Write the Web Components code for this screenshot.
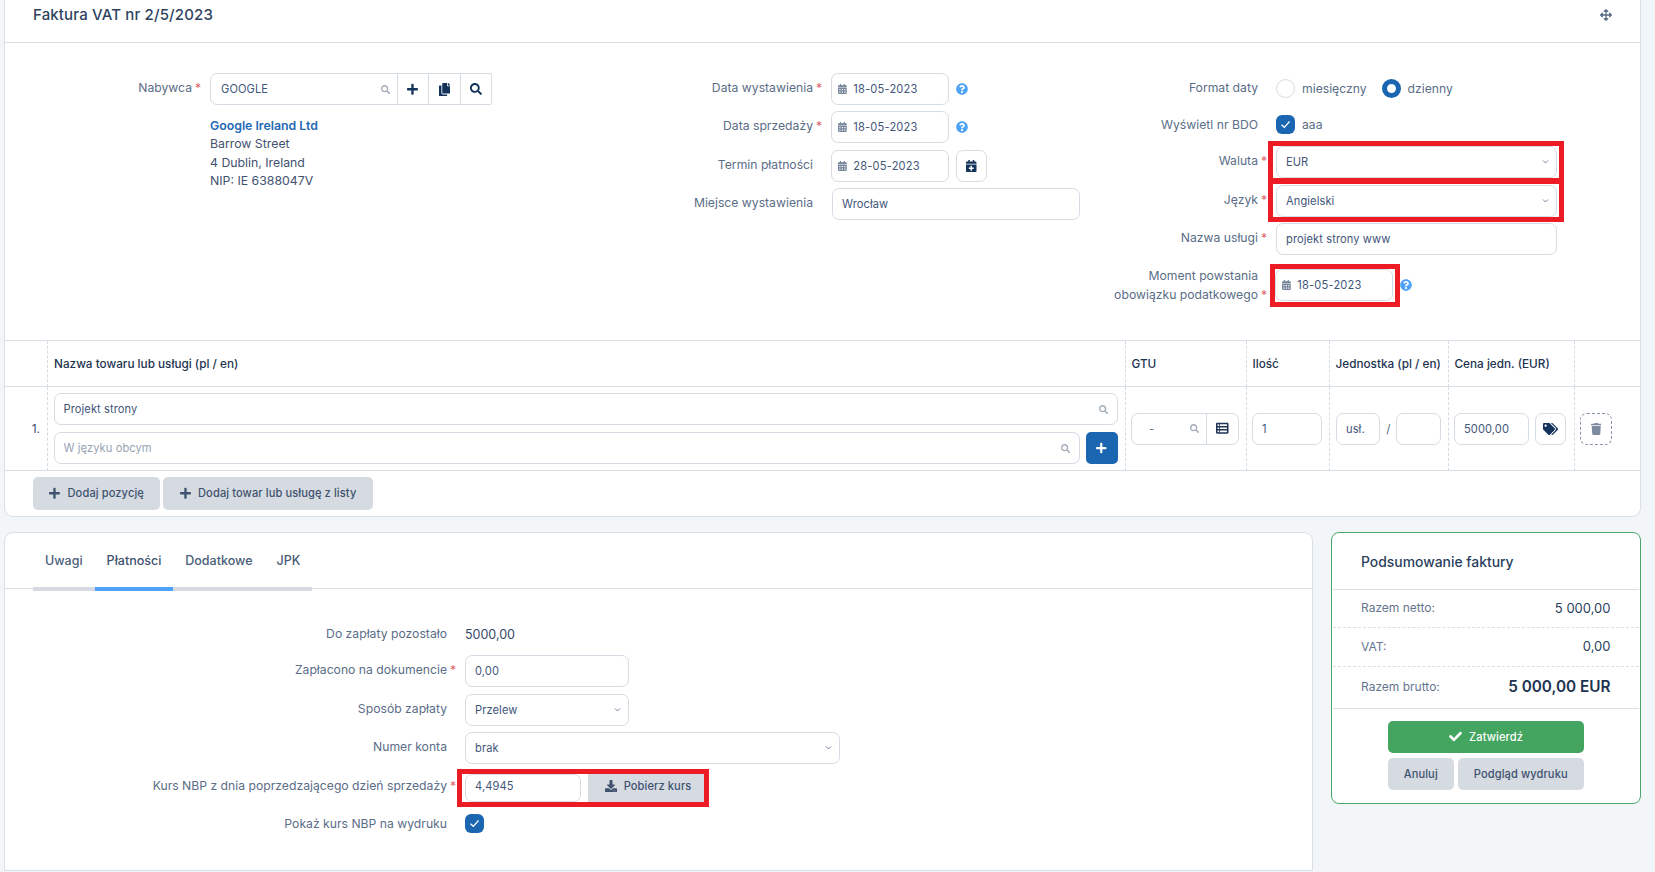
<!DOCTYPE html>
<html lang="pl"><head><meta charset="utf-8"><title>Faktura VAT</title>
<style>
html,body{margin:0;padding:0;background:#f3f6f9;height:872px;overflow:hidden;font-family:Inter,"Liberation Sans",sans-serif;font-size:12px;color:#3f5270}
</style></head><body>
<invoice-app></invoice-app>
<script>
const ICONS={
search:[512,"M505 442.7L405.3 343c-4.5-4.5-10.6-7-17-7H372c27.6-35.3 44-79.7 44-128C416 93.1 322.9 0 208 0S0 93.1 0 208s93.1 208 208 208c48.3 0 92.7-16.4 128-44v16.3c0 6.4 2.5 12.5 7 17l99.7 99.7c9.4 9.4 24.6 9.4 33.9 0l28.3-28.3c9.4-9.4 9.4-24.6.1-34zM208 336c-70.7 0-128-57.2-128-128 0-70.7 57.2-128 128-128 70.7 0 128 57.2 128 128 0 70.7-57.2 128-128 128z"],
plus:[448,"M416 208H272V64c0-17.67-14.33-32-32-32h-32c-17.67 0-32 14.33-32 32v144H32c-17.67 0-32 14.33-32 32v32c0 17.67 14.33 32 32 32h144v144c0 17.67 14.33 32 32 32h32c17.67 0 32-14.33 32-32V304h144c17.67 0 32-14.33 32-32v-32c0-17.67-14.33-32-32-32z"],
copy:[448,"M320 448v40c0 13.255-10.745 24-24 24H24c-13.255 0-24-10.745-24-24V120c0-13.255 10.745-24 24-24h72v296c0 30.879 25.121 56 56 56h168zm0-344V0H152c-13.255 0-24 10.745-24 24v368c0 13.255 10.745 24 24 24h272c13.255 0 24-10.745 24-24V128H344c-13.2 0-24-10.8-24-24zm120.971-31.029L375.029 7.029A24 24 0 0 0 358.059 0H352v96h96v-6.059a24 24 0 0 0-7.029-16.97z"],
cal:[448,"M0 464c0 26.5 21.5 48 48 48h352c26.5 0 48-21.5 48-48V192H0v272zm320-196c0-6.6 5.4-12 12-12h40c6.6 0 12 5.4 12 12v40c0 6.6-5.4 12-12 12h-40c-6.6 0-12-5.4-12-12v-40zm0 128c0-6.6 5.4-12 12-12h40c6.6 0 12 5.4 12 12v40c0 6.6-5.4 12-12 12h-40c-6.6 0-12-5.4-12-12v-40zM192 268c0-6.6 5.4-12 12-12h40c6.6 0 12 5.4 12 12v40c0 6.6-5.4 12-12 12h-40c-6.6 0-12-5.4-12-12v-40zm0 128c0-6.6 5.4-12 12-12h40c6.6 0 12 5.4 12 12v40c0 6.6-5.4 12-12 12h-40c-6.6 0-12-5.4-12-12v-40zM64 268c0-6.6 5.4-12 12-12h40c6.6 0 12 5.4 12 12v40c0 6.6-5.4 12-12 12H76c-6.6 0-12-5.4-12-12v-40zm0 128c0-6.6 5.4-12 12-12h40c6.6 0 12 5.4 12 12v40c0 6.6-5.4 12-12 12H76c-6.6 0-12-5.4-12-12v-40zM400 64h-48V16c0-8.8-7.2-16-16-16h-32c-8.8 0-16 7.2-16 16v48H160V16c0-8.8-7.2-16-16-16h-32c-8.8 0-16 7.2-16 16v48H48C21.5 64 0 85.5 0 112v48h448v-48c0-26.5-21.5-48-48-48z"],
calplus:[448,"M436 160H12c-6.6 0-12-5.4-12-12v-36c0-26.5 21.5-48 48-48h48V12c0-6.6 5.4-12 12-12h40c6.6 0 12 5.4 12 12v52h128V12c0-6.6 5.4-12 12-12h40c6.6 0 12 5.4 12 12v52h48c26.5 0 48 21.5 48 48v36c0 6.6-5.4 12-12 12zM12 192h424c6.6 0 12 5.4 12 12v260c0 26.5-21.5 48-48 48H48c-26.5 0-48-21.5-48-48V204c0-6.6 5.4-12 12-12zm316 140c0-6.6-5.4-12-12-12h-60v-60c0-6.6-5.4-12-12-12h-40c-6.6 0-12 5.4-12 12v60h-60c-6.6 0-12 5.4-12 12v40c0 6.6 5.4 12 12 12h60v60c0 6.6 5.4 12 12 12h40c6.6 0 12-5.4 12-12v-60h60c6.6 0 12-5.4 12-12v-40z"],
help:[512,"M504 256c0 136.997-111.043 248-248 248S8 392.997 8 256C8 119.083 119.043 8 256 8s248 111.083 248 248zM262.655 90c-54.497 0-89.255 22.957-116.549 63.758-3.536 5.286-2.353 12.415 2.715 16.258l34.699 26.31c5.205 3.947 12.621 3.008 16.665-2.122 17.864-22.658 30.113-35.797 57.303-35.797 20.429 0 45.698 13.148 45.698 32.958 0 14.976-12.363 22.667-32.534 33.976C247.128 238.528 216 254.941 216 296v4c0 6.627 5.373 12 12 12h56c6.627 0 12-5.373 12-12v-1.333c0-28.462 83.186-29.647 83.186-106.667 0-58.002-60.165-102-116.531-102zM256 338c-25.365 0-46 20.635-46 46 0 25.364 20.635 46 46 46s46-20.636 46-46c0-25.365-20.635-46-46-46z"],
move:[512,"M352.201 425.775l-79.196 79.196c-9.373 9.373-24.568 9.373-33.941 0l-79.196-79.196c-15.119-15.119-4.411-40.971 16.971-40.97h51.162L228 284H127.196v51.162c0 21.382-25.851 32.09-40.971 16.971L7.029 272.937c-9.373-9.373-9.373-24.569 0-33.941L86.225 159.8c15.119-15.119 40.971-4.411 40.971 16.971V228H228V127.196h-51.23c-21.382 0-32.09-25.851-16.971-40.971l79.196-79.196c9.373-9.373 24.568-9.373 33.941 0l79.196 79.196c15.119 15.119 4.411 40.971-16.971 40.971h-51.162V228h100.804v-51.162c0-21.382 25.851-32.09 40.97-16.971l79.196 79.196c9.373 9.373 9.373 24.569 0 33.941L425.773 352.2c-15.119 15.119-40.971 4.411-40.97-16.971V284H284v100.804h51.23c21.382 0 32.09 25.851 16.971 40.971z"],
check:[512,"M173.898 439.404l-166.4-166.4c-9.997-9.997-9.997-26.206 0-36.204l36.203-36.204c9.997-9.998 26.207-9.998 36.204 0L192 312.69 432.095 72.596c9.997-9.997 26.207-9.997 36.204 0l36.203 36.204c9.997 9.997 9.997 26.206 0 36.204l-294.4 294.401c-9.998 9.997-26.207 9.997-36.204-.001z"],
tags:[640,"M497.941 225.941L286.059 14.059A48 48 0 0 0 252.118 0H48C21.49 0 0 21.49 0 48v204.118a48 48 0 0 0 14.059 33.941l211.882 211.882c18.744 18.745 49.136 18.746 67.882 0l204.118-204.118c18.745-18.745 18.745-49.137 0-67.882zM112 160c-26.51 0-48-21.49-48-48s21.49-48 48-48 48 21.49 48 48-21.49 48-48 48zm513.941 133.823L421.823 497.941c-18.745 18.745-49.137 18.745-67.882 0l-.36-.36L527.64 323.522c16.999-16.999 26.36-39.6 26.36-63.64s-9.362-46.641-26.36-63.64L331.397 0h48.721a48 48 0 0 1 33.941 14.059l211.882 211.882c18.745 18.745 18.745 49.137 0 67.882z"],
trash:[448,"M432 32H312l-9.4-18.7A24 24 0 0 0 281.1 0H166.8a23.72 23.72 0 0 0-21.4 13.3L136 32H16A16 16 0 0 0 0 48v32a16 16 0 0 0 16 16h416a16 16 0 0 0 16-16V48a16 16 0 0 0-16-16zM53.2 467a48 48 0 0 0 47.9 45h245.8a48 48 0 0 0 47.9-45L416 128H32z"],
download:[512,"M216 0h80c13.3 0 24 10.7 24 24v168h87.7c17.8 0 26.7 21.5 14.1 34.1L269.7 378.3c-7.5 7.5-19.8 7.5-27.3 0L90.1 226.1c-12.6-12.6-3.7-34.1 14.1-34.1H192V24c0-13.3 10.7-24 24-24zm296 376v112c0 13.3-10.7 24-24 24H24c-13.3 0-24-10.7-24-24V376c0-13.3 10.7-24 24-24h146.7l49 49c20.1 20.1 52.5 20.1 72.6 0l49-49H488c13.3 0 24 10.7 24 24zm-124 88c0-11-9-20-20-20s-20 9-20 20 9 20 20 20 20-9 20-20zm64 0c0-11-9-20-20-20s-20 9-20 20 9 20 20 20 20-9 20-20z"],
list:[512,"M464 32H48C21.49 32 0 53.49 0 80v352c0 26.51 21.49 48 48 48h416c26.51 0 48-21.49 48-48V80c0-26.51-21.49-48-48-48zM128 416H64v-64h64v64zm0-128H64v-64h64v64zm0-128H64V96h64v64zm320 256H160v-64h288v64zm0-128H160v-64h288v64zm0-128H160V96h288v64z"]
};
class FvIcon extends HTMLElement{connectedCallback(){
 const [w,d]=ICONS[this.getAttribute('name')];const s=this.getAttribute('size')||12;const c=this.getAttribute('color')||'currentColor';
 this.attachShadow({mode:'open'}).innerHTML=`<style>:host{display:inline-flex;flex:none;line-height:0}svg{display:block}</style><svg width="${s*w/512}" height="${s}" viewBox="0 0 ${w} 512" fill="${c}"><path d="${d}"/></svg>`;
}}
customElements.define('fv-icon',FvIcon);

/* Form row: right-aligned label, star gutter, control */
class FvField extends HTMLElement{connectedCallback(){
 const star=this.hasAttribute('required');
 this.attachShadow({mode:'open'}).innerHTML=`<style>
 :host{display:grid;grid-template-columns:var(--lw,200px) 1fr;min-height:var(--mh,32px)}
 .lab{display:flex;justify-content:flex-end;color:#5b6d87;font-size:12.2px;line-height:var(--lh,18px);padding-top:var(--lp,6px);text-align:right;align-self:var(--la,start)}
 .star{width:18px;flex:none;padding-left:3px;box-sizing:border-box;color:#dc5a62;text-align:left;align-self:end}
 .ctl{display:flex;align-items:center;min-width:0;gap:7px}
 </style><div class="lab"><span><slot name="label"></slot></span><span class="star">${star?'*':''}</span></div><div class="ctl"><slot></slot></div>`;
}}
customElements.define('fv-field',FvField);

/* Text input / select look-alike */
class FvInput extends HTMLElement{connectedCallback(){
 const a=n=>this.getAttribute(n);const v=a('value')||'',ph=a('placeholder')||'',lead=a('lead'),trail=a('trail'),sel=this.hasAttribute('select');
 this.attachShadow({mode:'open'}).innerHTML=`<style>
 :host{display:flex;align-items:center;box-sizing:border-box;height:32px;position:relative;flex:none;width:var(--w,100%);border:1px solid #d6dce4;border-radius:7px;background:#fff;padding:0 9px;color:#42567a;font-size:11.1px;gap:7px;letter-spacing:.1px}
 :host([lead]){padding-left:6px;gap:6.5px;letter-spacing:.2px}
 :host([mark])::after{content:"";position:absolute;inset:var(--mi,-6.5px -8px -6px -9px);border:5px solid #ed1c24;pointer-events:none;z-index:3}
 .t{flex:1;white-space:nowrap;overflow:hidden;line-height:30px}.ph{color:#98a3b2}
 .chev{position:absolute;right:7px;top:12px}
 </style>${lead?`<fv-icon name="${lead}" size="10" color="#76859a"></fv-icon>`:''}<span class="t ${ph?'ph':''}">${v||ph}</span>${trail?`<fv-icon name="${trail}" size="9" color="#a3adba"></fv-icon>`:''}${sel?`<svg class="chev" width="7" height="6" viewBox="0 0 7 6" fill="none" stroke="#74839a" stroke-width="1"><path d="M1 1.5l2.5 2.5L6 1.5"/></svg>`:''}<slot></slot>`;
}}
customElements.define('fv-input',FvInput);

class FvBtn extends HTMLElement{connectedCallback(){
 const ic=this.getAttribute('icon');const is=this.getAttribute('isize')||12;
 this.attachShadow({mode:'open'}).innerHTML=`<style>
 :host{display:inline-flex;align-items:center;justify-content:center;box-sizing:border-box;height:32px;border-radius:5px;background:#d5dbe1;color:#3f5270;font-size:11.1px;font-weight:500;gap:var(--g,7.5px);white-space:nowrap;flex:none;letter-spacing:.1px}
 :host([variant=green]){background:#43a55f;color:#fff;font-weight:500}
 :host([variant=blue]){background:#1a66b0;color:#fff}
 :host([variant=outline]){background:#fff;border:1px solid #d6dce4;border-radius:7px;color:#14335a}
 :host([variant=dashed]){background:#fff;border:1px dashed #8693a6;border-radius:7px}
 </style>${ic?`<fv-icon name="${ic}" size="${is}"></fv-icon>`:''}<slot></slot>`;
}}
customElements.define('fv-btn',FvBtn);

class FvCheck extends HTMLElement{connectedCallback(){
 const k=this.getAttribute('kind');
 this.attachShadow({mode:'open'}).innerHTML=`<style>
 :host{display:inline-flex;align-items:center;justify-content:center;flex:none;box-sizing:border-box;width:19px;height:19px;background:#1a66b0;border-radius:6px}
 :host([kind=radio]){border-radius:50%;background:#fff;border:1px solid #d6dce4}
 :host([kind=radio][on]){border:5.5px solid #1a66b0}
 </style>${k==='radio'?'':'<svg width="11" height="9" viewBox="0 0 11 9" fill="none" stroke="#fff" stroke-width="1.2"><path d="M1.5 4.7l2.8 2.6 5.2-5.8"/></svg>'}`;
}}
customElements.define('fv-check',FvCheck);

class FvCard extends HTMLElement{connectedCallback(){
 this.attachShadow({mode:'open'}).innerHTML=`<style>
 :host{display:block;box-sizing:border-box;background:#fff;border:1px solid #d9dfe6;border-radius:8px}
 :host([top-open]){border-top:0;border-radius:0 0 9px 9px}
 :host([bottom-open]){border-radius:9px 9px 0 0}
 :host([ok]){border-color:#48a868}
 </style><slot></slot>`;
}}
customElements.define('fv-card',FvCard);

class InvoiceMain extends HTMLElement{connectedCallback(){
 this.attachShadow({mode:'open'}).innerHTML=`<style>
 :host{display:block}
 header{height:42px;border-bottom:1px solid #d9dfe6;display:flex;justify-content:space-between;padding:0 28px 0 28px;align-items:flex-start}
 h1{margin:0;font-size:15px;font-weight:500;color:#2f435f;line-height:30px;letter-spacing:.15px}
 header fv-icon{margin-top:8.5px}
 .form{height:298px;box-sizing:border-box;padding-top:30px;display:grid;grid-template-columns:636px 445px 1fr;align-items:start;border-bottom:1px solid #d9dfe6}
 .c1{--lw:205px}
 .c2{--lw:190px;display:flex;flex-direction:column;gap:6.33px}
 .c3{--lw:190px;display:flex;flex-direction:column}
 .combo{display:flex;align-items:stretch;height:32px;width:282px;box-sizing:border-box;border:1px solid #d6dce4;border-radius:7px 2px 2px 7px;font-size:11.1px;letter-spacing:.1px;color:#42567a}
 .combo .t{flex:1;display:flex;align-items:center;justify-content:space-between;padding:0 7px 0 10px}
 .combo .b{width:30.5px;border-left:1px solid #d6dce4;display:flex;align-items:center;justify-content:center;color:#14335a}
 .addr{margin:11px 0 0 205px;line-height:18.2px;color:#3f5270;font-size:12.3px}
 .addr b{display:block;color:#1f69b3;font-weight:600;line-height:19.4px}
 .sq{width:31px;--g:0px}
 .opt{display:flex;align-items:center;gap:7px;font-size:12.2px;color:#5b6d87;margin-top:-2px}
 .opt.b{margin-top:-1px}
 .c3 fv-field:nth-child(2){margin-top:4px;--lp:7px}
 .c3 fv-field:nth-child(3){margin-top:5.2px}
 .c3 fv-field:nth-child(4){margin-top:6.4px}
 .c3 fv-field:nth-child(5){margin-top:6.5px}
 .c3 fv-field:nth-child(6){margin-top:11.8px;--lp:0px;--lh:18.7px;--mh:37px}
 .c3 fv-input{--w:281px}
 .c3 .moment{--w:118px;--mi:-5.4px -8px -7px -6px;margin:-2px 0 0 -1px}
 .c3 .hq{margin-top:-2px}
 .tb{display:grid;grid-template-columns:42px 1077.5px 121px 83px 119px 126px 1fr}
 .th,.td{border-left:1px dashed #d4dae2;box-sizing:border-box;min-width:0}
 .th:nth-child(7n+1),.td:nth-child(7n+1){border-left:0}
 .th{height:46px;border-bottom:1px solid #d9dfe6;display:flex;align-items:center;padding-left:6px;font-weight:500;color:#1d3350;font-size:11.75px;white-space:nowrap}
 .td{height:84px;border-bottom:1px solid #d9dfe6;display:flex;align-items:center;gap:6px;padding-left:5.5px}
 .td.num{justify-content:flex-end;padding:0 7px 0 0;color:#3f5270;font-size:12px}
 .td.unit{padding-left:6.5px}
 .stack{display:flex;flex-direction:column;gap:7px;flex:1;padding-right:7px;min-width:0}
 .two{display:flex;gap:6px}
 .two fv-input{flex:1;width:auto}
 .gtu{width:108px;padding:0}
 .gtu .in{display:flex;width:100%;height:100%;align-items:center;font-size:11.1px;color:#5b6d87}
 .gtu .dash{padding-left:10px;flex:1}
 .gtu .lst{width:31px;height:100%;border-left:1px solid #d6dce4;display:flex;align-items:center;justify-content:center}
 .actions{padding:5.5px 0 0 28px;display:flex;gap:3px;height:45px;box-sizing:border-box}
 .actions fv-btn{height:33px;width:127px}
 .actions fv-btn+fv-btn{width:210px}
 .slash{color:#5b6d87;width:17px;text-align:center;margin:0 -6px}
 </style>
 <fv-card top-open>
 <header><h1>Faktura VAT nr 2/5/2023</h1><fv-icon name="move" size="12" color="#5d6f88"></fv-icon></header>
 <section class="form">
  <div class="c1">
   <fv-field required><span slot="label">Nabywca</span>
    <div class="combo"><span class="t">GOOGLE<fv-icon name="search" size="9" color="#a3adba"></fv-icon></span><span class="b"><fv-icon name="plus" size="12.5"></fv-icon></span><span class="b"><fv-icon name="copy" size="13"></fv-icon></span><span class="b"><fv-icon name="search" size="12"></fv-icon></span></div>
   </fv-field>
   <div class="addr"><b>Google Ireland Ltd</b>Barrow Street<br>4 Dublin, Ireland<br>NIP: IE 6388047V</div>
  </div>
  <div class="c2">
   <fv-field required><span slot="label">Data wystawienia</span><fv-input style="--w:118px" lead="cal" value="18-05-2023"></fv-input><fv-icon name="help" size="12" color="#4fa3f7"></fv-icon></fv-field>
   <fv-field required><span slot="label">Data sprzedaży</span><fv-input style="--w:118px" lead="cal" value="18-05-2023"></fv-input><fv-icon name="help" size="12" color="#4fa3f7"></fv-icon></fv-field>
   <fv-field><span slot="label">Termin płatności</span><fv-input style="--w:118px" lead="cal" value="28-05-2023"></fv-input><fv-btn class="sq" variant="outline" icon="calplus" isize="12"></fv-btn></fv-field>
   <fv-field><span slot="label">Miejsce wystawienia</span><fv-input style="--w:248px;margin-left:1px" value="Wrocław"></fv-input></fv-field>
  </div>
  <div class="c3">
   <fv-field><span slot="label">Format daty</span><div class="opt"><fv-check kind="radio"></fv-check><span>miesięczny</span><fv-check kind="radio" on style="margin-left:8px"></fv-check><span>dzienny</span></div></fv-field>
   <fv-field><span slot="label">Wyświetl nr BDO</span><div class="opt b"><fv-check></fv-check><span>aaa</span></div></fv-field>
   <fv-field required><span slot="label">Waluta</span><fv-input select mark value="EUR"></fv-input></fv-field>
   <fv-field required><span slot="label">Język</span><fv-input select mark value="Angielski"></fv-input></fv-field>
   <fv-field required><span slot="label">Nazwa usługi</span><fv-input value="projekt strony www"></fv-input></fv-field>
   <fv-field required style="--la:center"><span slot="label">Moment powstania<br>obowiązku podatkowego</span><fv-input class="moment" mark lead="cal" value="18-05-2023"></fv-input><fv-icon class="hq" name="help" size="12" color="#4fa3f7"></fv-icon></fv-field>
  </div>
 </section>
 <section class="tb">
  <div class="th"></div><div class="th">Nazwa towaru lub usługi (pl / en)</div><div class="th">GTU</div><div class="th">Ilość</div><div class="th">Jednostka (pl / en)</div><div class="th">Cena jedn. (EUR)</div><div class="th"></div>
  <div class="td num">1.</div>
  <div class="td"><div class="stack"><fv-input value="Projekt strony" trail="search"></fv-input><div class="two"><fv-input placeholder="W języku obcym" trail="search"></fv-input><fv-btn variant="blue" class="sq" icon="plus" isize="12" style="width:32px"></fv-btn></div></div></div>
  <div class="td"><fv-input class="gtu" style="--w:108px;padding:0"><div class="in"><span class="dash">-</span><fv-icon name="search" size="9" color="#a3adba" style="margin-right:7px"></fv-icon><span class="lst"><fv-icon name="list" size="12.5" color="#1f3557"></fv-icon></span></div></fv-input></div>
  <div class="td"><fv-input style="--w:70px" value="1"></fv-input></div>
  <div class="td unit"><fv-input style="--w:44px" value="usł."></fv-input><span class="slash">/</span><fv-input style="--w:45px;margin-left:-1px"></fv-input></div>
  <div class="td"><fv-input style="--w:75px" value="5000,00"></fv-input><fv-btn class="sq" variant="outline" icon="tags" isize="12"></fv-btn></div>
  <div class="td"><fv-btn class="sq" variant="dashed" icon="trash" isize="12" style="color:#7c8b9f;width:32px"></fv-btn></div>
 </section>
 <div class="actions"><fv-btn icon="plus" isize="12.5">Dodaj pozycję</fv-btn><fv-btn icon="plus" isize="12.5">Dodaj towar lub usługę z listy</fv-btn></div>
 </fv-card>`;
}}
customElements.define('invoice-main',InvoiceMain);

class InvoicePayments extends HTMLElement{connectedCallback(){
 this.attachShadow({mode:'open'}).innerHTML=`<style>
 :host{display:block;height:100%}
 .tabs{height:55px;border-bottom:1px solid #d9dfe6;display:flex;align-items:flex-start;padding-left:28px}
 .tab{font-weight:500;font-size:12.5px;color:#4a5d78;height:58px;box-sizing:border-box;padding:1px 12px 0;display:flex;align-items:center;border-bottom:4px solid #d5dbe1}
 .tab.on{border-bottom-color:#4fa3f7;color:#3f5270}
 .form{--lw:460px;padding-top:31px;display:flex;flex-direction:column;gap:6.4px}
 .val{font-size:12.5px;color:#334865}
 .first{--mh:29px;--lp:5px}
 .last{--mh:28px;--lp:5px;margin-top:1px}
 .kurs{display:flex;gap:6.5px;position:relative;margin-top:2.8px}
 .kurs::after{content:"";position:absolute;inset:-5px -5px -5px -8px;border:5px solid #ed1c24;pointer-events:none}
 .kurs fv-input{--w:116px;height:28px;padding-bottom:3px}
 .kurs fv-btn{width:116px;height:28px;--g:7px;border-radius:0;padding:0 0 3px 5px}
 </style>
 <nav class="tabs"><div class="tab">Uwagi</div><div class="tab on">Płatności</div><div class="tab">Dodatkowe</div><div class="tab">JPK</div></nav>
 <div class="form">
  <fv-field class="first"><span slot="label">Do zapłaty pozostało</span><span class="val">5000,00</span></fv-field>
  <fv-field required><span slot="label">Zapłacono na dokumencie</span><fv-input style="--w:164px" value="0,00"></fv-input></fv-field>
  <fv-field><span slot="label">Sposób zapłaty</span><fv-input select style="--w:164px" value="Przelew"></fv-input></fv-field>
  <fv-field><span slot="label">Numer konta</span><fv-input select style="--w:375px" value="brak"></fv-input></fv-field>
  <fv-field required><span slot="label">Kurs NBP z dnia poprzedzającego dzień sprzedaży</span><div class="kurs"><fv-input value="4,4945"></fv-input><fv-btn icon="download" isize="12">Pobierz kurs</fv-btn></div></fv-field>
  <fv-field class="last"><span slot="label">Pokaż kurs NBP na wydruku</span><fv-check></fv-check></fv-field>
 </div>`;
}}
customElements.define('invoice-payments',InvoicePayments);

class InvoiceSummary extends HTMLElement{connectedCallback(){
 this.attachShadow({mode:'open'}).innerHTML=`<style>
 :host{display:block;padding:1px}
 h2{margin:0;height:55px;display:flex;align-items:center;padding-left:28px;font-size:13.9px;font-weight:500;color:#2a3f5e;border-bottom:1px solid #d9dfe6}
 .r{display:flex;justify-content:space-between;align-items:center;padding:0 28px 2px;height:35px;border-bottom:1px dashed #d9dfe6;color:#64768f;font-size:12px}
 .r+.r{height:36px}
 .r span+span{color:#2a3f5e;font-size:13px}
 .r.tot{height:39px;border-bottom:1px solid #d9dfe6}
 .r.tot span+span{font-size:15.3px;font-weight:600;color:#1d3350}
 .acts{width:196px;margin:11.5px auto 0;display:flex;flex-wrap:wrap;gap:5.5px 4px}
 .acts fv-btn:first-child{width:196px}
 .acts fv-btn:nth-child(2){width:66px}
 .acts fv-btn:nth-child(3){width:126px}
 </style>
 <h2>Podsumowanie faktury</h2>
 <div class="r"><span>Razem netto:</span><span>5 000,00</span></div>
 <div class="r"><span>VAT:</span><span>0,00</span></div>
 <div class="r tot"><span>Razem brutto:</span><span>5 000,00 EUR</span></div>
 <div class="acts"><fv-btn variant="green" icon="check" isize="13">Zatwierdź</fv-btn><fv-btn>Anuluj</fv-btn><fv-btn>Podgląd wydruku</fv-btn></div>`;
}}
customElements.define('invoice-summary',InvoiceSummary);

class InvoiceApp extends HTMLElement{connectedCallback(){
 this.attachShadow({mode:'open'}).innerHTML=`<style>
 :host{display:block;padding-left:4px;width:1637px;box-sizing:content-box}
 .bottom{display:grid;grid-template-columns:1308.5px 309.5px;column-gap:18.5px;margin-top:15px;align-items:start}
 .left{height:339px}
 </style>
 <invoice-main></invoice-main>
 <div class="bottom">
  <fv-card class="left" bottom-open><invoice-payments></invoice-payments></fv-card>
  <fv-card ok style="height:272px"><invoice-summary></invoice-summary></fv-card>
 </div>`;
}}
customElements.define('invoice-app',InvoiceApp);
</script>
</body></html>
